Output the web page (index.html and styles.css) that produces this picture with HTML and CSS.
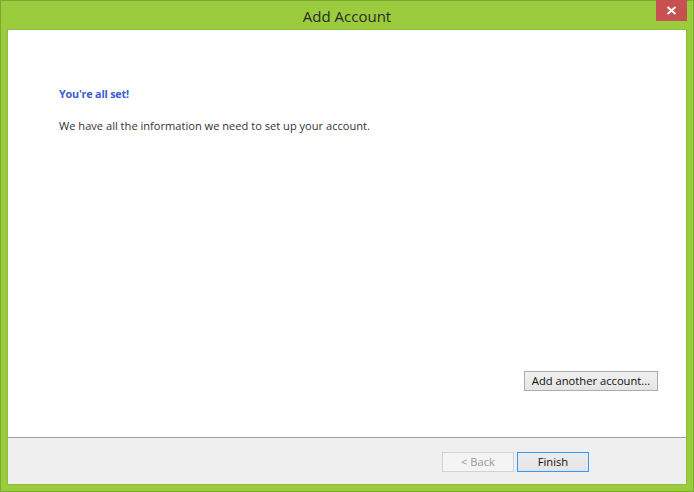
FILE: index.html
```html
<!DOCTYPE html>
<html lang="en">
<head>
  <meta charset="UTF-8">
  <title>Add Account</title>
  <link rel="stylesheet" href="styles.css">
</head>
<body>

<div class="window">
  <div class="titlebar">
    <div class="title">Add Account</div>
    <div class="close">
      <svg width="11" height="9" viewBox="0 0 11 9">
        <path d="M1.5 1 L9.5 8 M9.5 1 L1.5 8" stroke="#fff" stroke-width="2"/>
      </svg>
    </div>
  </div>

  <div class="client">
    <div class="content">
      <div class="heading">You're all set!</div>
      <p class="info">We have all the information we need to set up your account.</p>
      <div class="spacer"></div>
      <div class="another-row">
        <button class="btn another">Add another account...</button>
      </div>
    </div>
    <div class="footer">
      <button class="btn nav" disabled>&lt; Back</button>
      <button class="btn nav default">Finish</button>
    </div>
  </div>
</div>

</body>
</html>
```

FILE: styles.css
```css
body {
  margin: 0;
  padding: 0;
  font-family: "Open Sans", "Noto Sans", sans-serif;
}

/* outer frame */
.window {
  width: 694px;
  height: 492px;
  box-sizing: border-box;
  border: 1px solid #79ab32;
  background-color: #9bcc3d;
  display: flex;
  flex-direction: column;
  position: relative;
}

.titlebar {
  height: 29px;
  display: flex;
  align-items: center;
  justify-content: center;
}

.title {
  font-size: 15px;
  color: #2b2b2b;
  margin-top: 1px;
}

.close {
  position: absolute;
  top: -1px;
  right: 6px;
  width: 31px;
  height: 21px;
  background-color: #c75050;
  display: flex;
  align-items: center;
  justify-content: center;
}

.client {
  flex: 1;
  margin: 0 7px 7px 7px;
  display: flex;
  flex-direction: column;
  background-color: #fff;
  box-shadow: 0 0 0 1px #8fbf38;
}

.content {
  flex: 1;
  display: flex;
  flex-direction: column;
  padding: 56px 28px 46px 51px;
  border-bottom: 1px solid #a0a0a0;
}

.heading {
  font-size: 10.8px;
  font-weight: bold;
  letter-spacing: -0.2px;
  color: #3b5ccf;
  line-height: 16px;
}

.info {
  margin: 16px 0 0 0;
  font-size: 11.1px;
  color: #333;
  line-height: 16px;
}

.spacer {
  flex: 1;
}

.another-row {
  display: flex;
  justify-content: flex-end;
}

.btn {
  font-family: inherit;
  font-size: 11.2px;
  color: #111;
  height: 20px;
  padding: 0 7px;
  border: 1px solid #acacac;
  background: linear-gradient(#f0f0f0, #e5e5e5);
  box-sizing: border-box;
  line-height: 16px;
}

.another {
  width: 134px;
  padding: 0;
}

.footer {
  height: 46px;
  background-color: #efefef;
  display: flex;
  justify-content: flex-end;
  align-items: flex-start;
  gap: 3px;
  padding: 14px 97px 0 0;
  box-sizing: border-box;
}

.nav {
  width: 72px;
}

.nav:disabled {
  color: #9a9a9a;
  border-color: #d2d2d2;
  background: #f4f4f4;
}

.default {
  border-color: #3399ff;
  background: linear-gradient(#ececec, #e4e4e4);
}
```
